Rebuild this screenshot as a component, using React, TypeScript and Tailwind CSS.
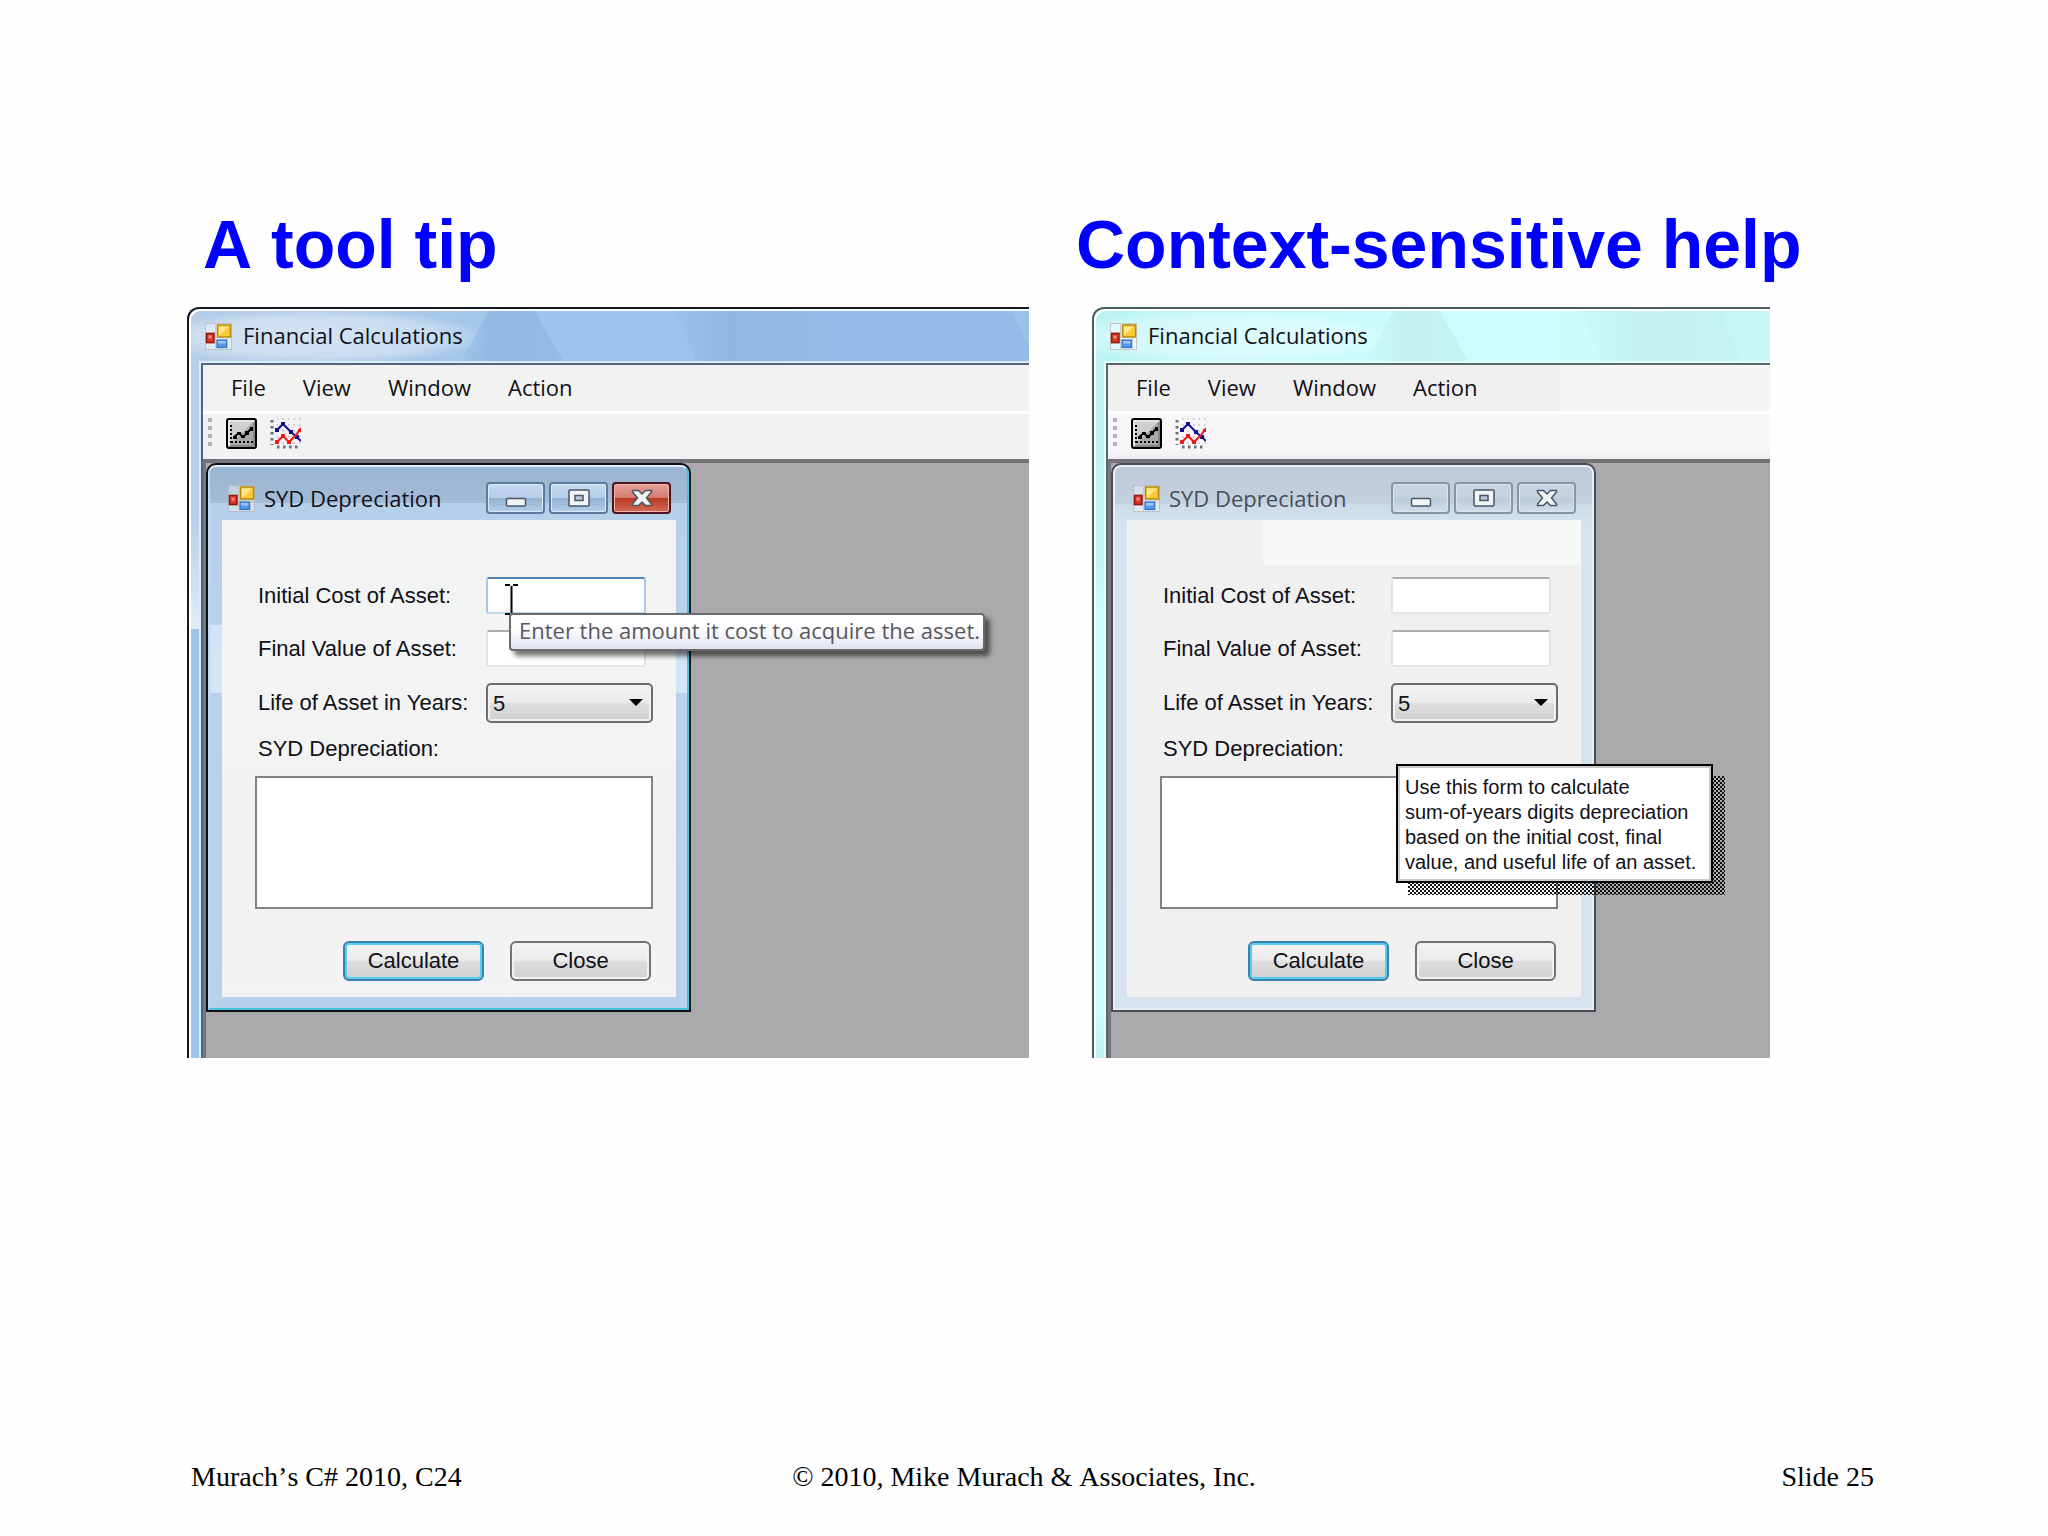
import type { ReactNode } from 'react';
import clsx from 'clsx';

const UI_FONT = "font-['Open_Sans','Noto_Sans',sans-serif]";
const FORM_FONT = "font-['Liberation_Sans',Arial,sans-serif]";

const FormIcon = () => (
  <svg viewBox="0 0 27 27" className="size-[27px] shrink-0" aria-hidden="true">
    <rect x="0.5" y="0.5" width="26" height="26" fill="#ffffff" fillOpacity="0.35" stroke="#b9b4b4" strokeOpacity="0.7" />
    <path d="M0 9.5h12M10.5 0v27M0 20.5h10M22.5 15v12" stroke="#c9c4c2" strokeOpacity="0.8" fill="none" />
    <rect x="1.5" y="10.5" width="7.5" height="9" fill="#d9372a" stroke="#94180f" strokeWidth="1.5" />
    <rect x="3.5" y="12.5" width="3" height="3" fill="#f08c80" />
    <rect x="12.5" y="2" width="13" height="12" fill="#f9cb35" stroke="#b98a12" strokeWidth="1.5" />
    <path d="M14 12.5V3.5H24L14 12.5Z" fill="#fde78a" />
    <rect x="12" y="17" width="9.5" height="7.5" fill="#5597e8" stroke="#3b74c6" strokeWidth="1.2" />
    <rect x="13" y="18" width="7.5" height="2.5" fill="#9cc6f6" />
  </svg>
);

const ChartIcon = () => (
  <svg viewBox="0 0 31 31" className="size-[31px]" aria-hidden="true">
    <rect x="1" y="1" width="29" height="29" rx="2" fill="#a9a9a9" stroke="#000" strokeWidth="2" />
    <path d="M3 28V3H28Z" fill="#cfcfcf" />
    <path d="M3 28V3H28" fill="none" stroke="#e6e6e6" strokeWidth="2" />
    <path d="M28 4V28H4" fill="none" stroke="#868686" strokeWidth="2" />
    <path d="M5 7V25" fill="none" stroke="#000" strokeWidth="2" strokeDasharray="2 2" />
    <path d="M5 24H27" fill="none" stroke="#000" strokeWidth="2" strokeDasharray="2 2" />
    <path d="M8 19L13 15L17 19L21 15L26 10" fill="none" stroke="#000" strokeWidth="2" />
    <path d="M7 18h4v3h-4zM11 14h4v3h-4zM15 17h4v3h-4zM19 13h4v4h-4zM24 9h3v4h-3z" fill="#000" />
  </svg>
);

const CompareIcon = () => (
  <svg viewBox="0 0 31 31" className="size-[31px]" aria-hidden="true">
    <path d="M7 1H31M7 7H31M7 13H31M7 19H31M7 25H31" fill="none" stroke="#bdbdbd" strokeWidth="1.5" strokeDasharray="1.5 4" />
    <path d="M2 2V27" fill="none" stroke="#6f6f6f" strokeWidth="3" strokeDasharray="2.5 3.5" />
    <path d="M7 29H31" fill="none" stroke="#6f6f6f" strokeWidth="3" strokeDasharray="2.5 3.5" />
    <path d="M7 12L13 6L21 14L31 23" fill="none" stroke="#10108c" strokeWidth="2" />
    <path d="M5 10h4v4h-4zM11 4h4v4h-4zM19 12h4v4h-4zM25 17h4v4h-4z" fill="#10108c" />
    <path d="M7 24L13 18L19 24L26 17L31 10" fill="none" stroke="#f01818" strokeWidth="2" />
    <path d="M5 22h4v4h-4zM11 16h4v4h-4zM17 22h4v4h-4zM28 11h3v3h-3z" fill="#f01818" />
  </svg>
);

const MinimizeGlyph = () => (
  <svg viewBox="0 0 22 20" className="w-[22px] h-5" aria-hidden="true">
    <rect x="1.5" y="10.5" width="19" height="7.5" rx="1" fill="#f3f4f6" stroke="#4b5563" strokeWidth="1.5" />
  </svg>
);

const MaximizeGlyph = () => (
  <svg viewBox="0 0 22 20" className="w-[22px] h-5" aria-hidden="true">
    <rect x="1" y="2" width="20" height="16" rx="1" fill="#f3f4f6" stroke="#4b5563" strokeWidth="1.5" />
    <rect x="7" y="7.5" width="8" height="5" fill="#b9c6d6" stroke="#4b5563" strokeWidth="1.5" />
  </svg>
);

const CloseGlyph = () => (
  <svg viewBox="0 0 22 20" className="w-[22px] h-5" aria-hidden="true">
    <path
      d="M1.5 2.5H7.5L11 6L14.5 2.5H20.5V4L15.5 10L20.5 16V17.5H14.5L11 14L7.5 17.5H1.5V16L6.5 10L1.5 4Z"
      fill="#f3f4f6"
      stroke="#4b5563"
      strokeWidth="1.5"
    />
  </svg>
);

const IBeam = () => (
  <svg viewBox="0 0 13 31" className="absolute left-[299px] top-[121px] w-[13px] h-[31px]" aria-hidden="true">
    <path d="M0 1H5M8 1H13M6.5 2V29M0 30H5M8 30H13" fill="none" stroke="#000" strokeWidth="2" />
  </svg>
);

const Glass = ({ active }: { active: boolean }) => (
  <svg
    viewBox="0 0 838 50"
    preserveAspectRatio="xMinYMin slice"
    className="absolute inset-0 w-full h-full"
    aria-hidden="true"
  >
    <defs>
      <linearGradient id={active ? 'glassA' : 'glassB'} x1="0" x2="1" y1="0" y2="0">
        <stop offset="0" stopColor={active ? '#b6cfe8' : '#b9f3f3'} />
        <stop offset="0.32" stopColor={active ? '#a5c7ea' : '#cafcfd'} />
        <stop offset="0.45" stopColor={active ? '#9cc4ee' : '#cbfefe'} />
        <stop offset="1" stopColor={active ? '#9bc2ea' : '#c9fafa'} />
      </linearGradient>
      <linearGradient id={active ? 'streakA' : 'streakB'} x1="0" x2="1" y1="0" y2="0">
        <stop offset="0" stopColor={active ? '#8fb6e2' : '#c3f1f1'} stopOpacity="0.2" />
        <stop offset="0.35" stopColor={active ? '#8fb6e2' : '#c3f1f1'} stopOpacity="0.9" />
        <stop offset="1" stopColor={active ? '#92b9e4' : '#c3f1f1'} stopOpacity="0.8" />
      </linearGradient>
      <radialGradient id={active ? 'glowA' : 'glowB'}>
        <stop offset="0" stopColor="#ffffff" stopOpacity="0.45" />
        <stop offset="0.7" stopColor="#ffffff" stopOpacity="0.35" />
        <stop offset="1" stopColor="#ffffff" stopOpacity="0" />
      </radialGradient>
    </defs>
    <rect width="838" height="50" fill={active ? 'url(#glassA)' : 'url(#glassB)'} />
    <ellipse cx="130" cy="26" rx="170" ry="28" fill={active ? 'url(#glowA)' : 'url(#glowB)'} />
    <path d="M298 0H344L372 50H270Z" fill={active ? 'url(#streakA)' : 'url(#streakB)'} />
    <path d="M484 0H626L644 50H506Z" fill={active ? 'url(#streakA)' : 'url(#streakB)'} />
    <path d="M626 0H820L838 36V50H644Z" fill={active ? '#94bae8' : '#c6f7f7'} />
  </svg>
);

const MENUS = ['File', 'View', 'Window', 'Action'];

interface AppWindowProps {
  active: boolean;
  children: ReactNode;
}

const AppWindow = ({ active, children }: AppWindowProps) => (
  <section
    className={clsx(
      'rounded-tl-xl border-l-2 border-t-2 overflow-hidden bg-white text-[22px] text-[#101018]',
      UI_FONT,
      active ? 'border-[#111a26]' : 'border-[#4a5f60]'
    )}
  >
    <div
      className={clsx(
        'rounded-tl-[10px] ml-[2px] mt-[2px] overflow-hidden',
        active
          ? 'bg-[linear-gradient(180deg,#b6cfe8_0,#b6cfe8_200px,#dbe7f5_300px,#e4ebf6_318px,#9cc3ea_318px)]'
          : 'bg-[linear-gradient(180deg,#b9f3f3_0,#c4f5f6_250px,#cbfefe_300px,#cbfefe_700px,#bff0f1_748px)]'
      )}
    >
      <header className="relative h-[50px]">
        <Glass active={active} />
        <div className="relative h-full pl-[14px] flex items-center gap-[11px]">
          <FormIcon />
          <h2 className="leading-6 pb-[3px]">Financial Calculations</h2>
        </div>
      </header>

      <div className={clsx('ml-2 border-l-2 border-t-2', active ? 'border-[#dceafa]' : 'border-[#e6ffff]')}>
        <div className={clsx('border-l-2 border-t-2', active ? 'border-[#51657f]' : 'border-[#56696c]')}>
          <nav className={clsx('flex h-[46px]', active ? 'bg-[#f2f2f1]' : 'bg-[#f5f5f5]')}>
            <div className={clsx('flex items-center gap-[37px] pl-7 pr-[82px] pb-[3px]', !active && 'bg-[#efefef]')}>
              {MENUS.map((menu) => (
                <button key={menu} type="button" className="leading-6">
                  {menu}
                </button>
              ))}
            </div>
          </nav>

          <div
            className={clsx(
              'flex items-start h-12 border-t-3 border-white pl-[5px] pt-1',
              active ? 'bg-[#f3f1f4]' : 'bg-linear-to-b from-[#f8f6f8] from-75% to-[#efedf0]'
            )}
          >
            <div className="mr-[14px] flex flex-col gap-1">
              {[0, 1, 2, 3].map((dot) => (
                <span key={dot} className="size-1 bg-[#b4b2b5]" />
              ))}
            </div>
            <button type="button" aria-label="Calculate depreciation" className="mr-[13px]">
              <ChartIcon />
            </button>
            <button type="button" aria-label="Compare values">
              <CompareIcon />
            </button>
          </div>

          <div className="border-t-4 border-[#757376] bg-[#aaa9ab]">
            <div className="relative border-l-3 border-[#76777a] pb-[46px]">{children}</div>
          </div>
        </div>
      </div>
    </div>
  </section>
);

const captionButton = (active: boolean) =>
  clsx(
    'w-[59px] h-8 rounded-[4px] border-2 flex items-center justify-center',
    active
      ? 'border-[#5c7ba0] bg-[linear-gradient(180deg,#c6daf0_0,#b4cde8_50%,#94b0cf_50%,#b4d0ec_100%)] shadow-[inset_0_0_0_1px_#dceafa]'
      : 'border-[#8795a8] bg-[linear-gradient(180deg,#c8d6e4_0,#c3d1e0_50%,#bccbdc_50%,#cfdeed_100%)] shadow-[inset_0_0_0_1px_#d9e4ef]'
  );

const textBox = 'w-40 h-[37px] px-2 rounded-[3px] border-2 bg-white outline-none';
const formLabel = 'pl-[3px] leading-6';
const formButton = 'w-[141px] h-10 rounded-[6px] border-2 leading-6';
const buttonFace = 'bg-[linear-gradient(180deg,#f3f3f3_0,#ebebeb_48%,#dddddd_52%,#d0d0d0_100%)]';

interface DepreciationFormProps {
  id: string;
  active: boolean;
}

const DepreciationForm = ({ id, active }: DepreciationFormProps) => (
  <div
    className={clsx(
      'w-[485px] rounded-t-[10px] border-2 overflow-hidden',
      active ? 'border-[#0c1018]' : 'border-[#4c4c54]'
    )}
  >
    <div
      className={clsx(
        'rounded-t-[8px] border-2',
        active
          ? 'border-t-[#e2eefa] border-l-[#c3d8ee] border-r-[#41c3dc] border-b-[#41c3dc] bg-[linear-gradient(180deg,#9bb4d0_0,#a3bbd6_36px,#b7d0ea_36px,#b9d1ec_158px,#cfe4f6_158px,#d3e6f8_226px,#b9d1ea_226px,#b9d1ea_100%)]'
          : 'border-[#e8eff6] bg-[linear-gradient(180deg,#bccada_0,#c2d0df_36px,#ccdbe9_38px,#d5e4f0_60px,#d5e4ef_300px,#d7e3f1_100%)]'
      )}
    >
      <header className="flex items-center pt-[15px] pb-[6px] pl-[18px] pr-4">
        <FormIcon />
        <h3 className={clsx('ml-[9px] mr-auto leading-6', !active && 'text-[#474c58]')}>SYD Depreciation</h3>
        <div className="flex gap-1">
          <button type="button" aria-label="Minimize" className={captionButton(active)}>
            <MinimizeGlyph />
          </button>
          <button type="button" aria-label="Maximize" className={captionButton(active)}>
            <MaximizeGlyph />
          </button>
          {active ? (
            <button
              type="button"
              aria-label="Close window"
              className="w-[59px] h-8 rounded-[4px] border-2 flex items-center justify-center border-[#4d1420] bg-[linear-gradient(180deg,#e7a39c_0,#d67c72_48%,#b93a22_50%,#d26a58_100%)] shadow-[inset_0_0_0_1px_#f0b9b0]"
            >
              <CloseGlyph />
            </button>
          ) : (
            <button type="button" aria-label="Close window" className={captionButton(false)}>
              <CloseGlyph />
            </button>
          )}
        </div>
      </header>

      <form
        onSubmit={(e) => e.preventDefault()}
        className={clsx(
          'ml-3 mr-[11px] mb-[11px] pb-4',
          FORM_FONT,
          active ? 'bg-linear-to-b from-[#f2f4f3] to-[#f3f2f4]' : 'bg-[#f0f0f1]'
        )}
      >
        <div className={clsx('h-[45px] ml-[136px]', !active && 'bg-[#f6f8f7]')} />
        <div className="pl-[33px] pr-[23px] pt-3">
          <div className="grid grid-cols-[231px_1fr] items-center gap-y-4">
            <label htmlFor={`${id}-cost`} className={formLabel}>
              Initial Cost of Asset:
            </label>
            <input
              id={`${id}-cost`}
              type="text"
              className={clsx(
                textBox,
                active
                  ? 'border-t-[#4f81b0] border-x-[#a9c8e6] border-b-[#bcdaf0]'
                  : 'border-t-[#acacae] border-x-[#e0e2e6] border-b-[#e2e4e7]'
              )}
            />
            <label htmlFor={`${id}-value`} className={formLabel}>
              Final Value of Asset:
            </label>
            <input
              id={`${id}-value`}
              type="text"
              className={clsx(textBox, 'border-t-[#acacae] border-x-[#e0e2e6] border-b-[#e2e4e7]')}
            />
            <label htmlFor={`${id}-life`} className={formLabel}>
              Life of Asset in Years:
            </label>
            <div className="relative">
              <select
                id={`${id}-life`}
                defaultValue="5"
                className={clsx(
                  'w-full h-10 pl-[5px] rounded-[5px] border-2 border-[#6d6d6f] appearance-none outline-none shadow-[inset_0_0_0_2px_#f2f2f2]',
                  buttonFace
                )}
              >
                <option>5</option>
              </select>
              <svg viewBox="0 0 14 7" className="absolute right-[10px] top-4 w-[14px] h-[7px] pointer-events-none" aria-hidden="true">
                <path d="M0 0H14L7 7Z" fill="#000" />
              </svg>
            </div>
          </div>

          <label htmlFor={`${id}-result`} className={clsx('block mt-[14px]', formLabel)}>
            SYD Depreciation:
          </label>
          <select
            id={`${id}-result`}
            size={5}
            className="block w-full h-[133px] mt-[15px] border-2 border-[#828284] bg-white appearance-none outline-none"
          />

          <div className="flex justify-end gap-[26px] mt-8 pr-[2px]">
            <button
              type="submit"
              className={clsx(formButton, buttonFace, 'border-[#3d7fa8] shadow-[inset_0_0_0_2px_#55cdf0]')}
            >
              Calculate
            </button>
            <button
              type="button"
              className={clsx(formButton, buttonFace, 'border-[#727274] shadow-[inset_0_0_0_2px_#f2f2f2]')}
            >
              Close
            </button>
          </div>
        </div>
      </form>
    </div>
  </div>
);

const ToolTip = () => (
  <div
    role="tooltip"
    className="absolute left-[303px] top-[150px] h-[38px] pl-2 pr-[3px] pb-[3px] flex items-center whitespace-nowrap rounded-[4px] border-2 border-[#6b6b6e] bg-linear-to-b from-white from-35% to-[#e2e5f2] text-[#59575e] shadow-[5px_5px_5px_rgba(0,0,0,0.55)]"
  >
    Enter the amount it cost to acquire the asset.
  </div>
);

const HelpPopup = () => (
  <div role="note" className={clsx('absolute left-[285px] top-[301px] w-[317px] text-xl', FORM_FONT)}>
    <div className="absolute left-3 top-3 w-full h-full bg-[repeating-conic-gradient(#111_0_25%,transparent_0_50%)] bg-[length:4px_4px]" />
    <div className="relative border-2 border-black bg-white">
      <p className="border-2 border-[#c9c9c9] pl-[5px] pt-[7px] pb-1 leading-[25px] whitespace-nowrap">
        Use this form to calculate
        <br />
        sum-of-years digits depreciation
        <br />
        based on the initial cost, final
        <br />
        value, and useful life of an asset.
      </p>
    </div>
  </div>
);

const heading =
  "mb-[23px] font-['Liberation_Sans',Arial,sans-serif] font-bold text-[68px] leading-[80px] whitespace-nowrap text-[#0000fe] [font-kerning:none]";

const App = () => {
  return (
    <div className="min-h-screen flex flex-col bg-[#fefefe]">
      <main className="flex-1 flex items-start gap-[47px] pt-[204px] pl-[187px] pr-[246px]">
        <div className="flex-[842] min-w-0">
          <h1 className={clsx('pl-4', heading)}>A tool tip</h1>
          <AppWindow active>
            <DepreciationForm id="tip" active />
            <IBeam />
            <ToolTip />
          </AppWindow>
        </div>
        <div className="flex-[726] min-w-0">
          <h1 className={heading}>Context-sensitive help</h1>
          <div className="ml-4 mr-8">
            <AppWindow active={false}>
              <DepreciationForm id="help" active={false} />
              <HelpPopup />
            </AppWindow>
          </div>
        </div>
      </main>

      <footer className="grid grid-cols-[1fr_auto_1fr] px-[174px] pb-[41px] font-['Liberation_Serif','Times_New_Roman',serif] text-[28px] leading-9 text-black [font-kerning:none]">
        <span className="pl-[17px]">Murach’s C# 2010, C24</span>
        <span>© 2010, Mike Murach &amp; Associates, Inc.</span>
        <span className="text-right">Slide 25</span>
      </footer>
    </div>
  );
};

export default App;
